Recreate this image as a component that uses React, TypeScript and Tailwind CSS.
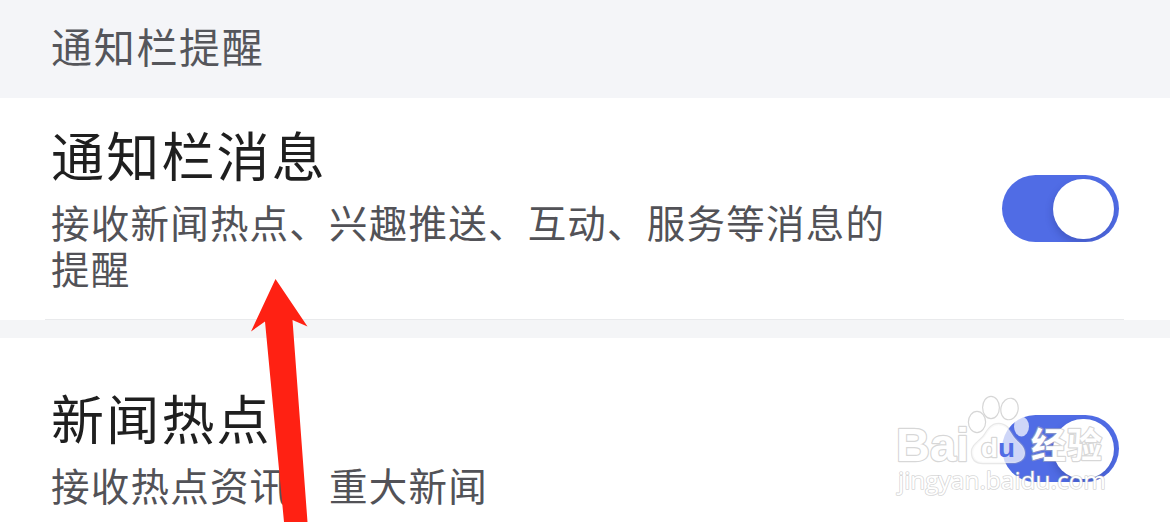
interface SettingRowProps {
  title: string
  lines: string[]
  className: string
  toggleClassName: string
}

const Toggle = ({ className }: { className: string }) => (
  <button
    role="switch"
    aria-checked="true"
    className={`flex h-[67px] w-[117px] shrink-0 items-center justify-end overflow-hidden rounded-full bg-[#506ce5] pr-[5px] ${className}`}
  >
    <span className="h-[60px] w-[61px] rounded-full bg-white shadow-[-1px_4px_7px_rgba(30,40,110,0.25)]" />
  </button>
)

const SettingRow = ({ title, lines, className, toggleClassName }: SettingRowProps) => (
  <section className={`flex items-start justify-between bg-white pr-[51px] pl-[51px] ${className}`}>
    <div className="whitespace-nowrap">
      <h2 className="text-[53px] leading-[60px] tracking-[2.2px] text-[#1f1f1f]">{title}</h2>
      <div className="mt-[14px] text-[38.5px] leading-[46px] tracking-[1.22px] text-[#525257]">
        {lines.map(line => (
          <p key={line}>{line}</p>
        ))}
      </div>
    </div>
    <Toggle className={toggleClassName} />
  </section>
)

const Arrow = () => (
  <svg className="pointer-events-none absolute inset-0" width="1170" height="522" viewBox="0 0 1170 522">
    <path d="M275.5 279 L307.5 326.5 L292.5 320 L307.5 522 L284 522 L265 321.5 L251 331.5 Z" fill="#ff2113" />
  </svg>
)

const Watermark = () => (
  <svg className="pointer-events-none absolute top-[380px] left-[880px]" width="260" height="142" viewBox="0 0 260 142">
    <g
      fill="#ffffff"
      stroke="#b4b4b4"
      strokeOpacity="0.55"
      strokeWidth="2.4"
      strokeLinejoin="round"
      fontFamily="'Liberation Sans', 'Noto Sans CJK SC', sans-serif"
      style={{ paintOrder: 'stroke' }}
    >
      <text x="16" y="81" fontSize="47" fontWeight="700" textLength="73" lengthAdjust="spacingAndGlyphs">
        Bai
      </text>
      <ellipse cx="97" cy="42" rx="8" ry="10" />
      <ellipse cx="111" cy="27.5" rx="7.8" ry="10.5" />
      <ellipse cx="129.5" cy="29" rx="8" ry="10.2" transform="rotate(12 129.5 29)" />
      <g fillOpacity="0.72" strokeOpacity="0.3">
        <ellipse cx="141.5" cy="46.5" rx="7.5" ry="10" stroke="none" />
        <path d="M118.500 44 C127 44 130 51 134 57 C139 63 145 66 145 73 C145 80 139 83 132 83 H103 C96 83 92 79 92 72 C92 65 99 62 104 56 C108 50 111 44 118.500 44 Z" />
      </g>
      <text x="101" y="77" fontSize="26" fontWeight="700" textLength="34" lengthAdjust="spacingAndGlyphs">
        d
        <tspan fill="#506ce5" stroke="none">
          u
        </tspan>
      </text>
      <text x="151" y="78" fontSize="35" fontWeight="700" fontFamily="'Noto Sans CJK SC', sans-serif" textLength="71">
        经验
      </text>
      <text
        x="18"
        y="109"
        fontSize="24"
        strokeWidth="1.6"
        fontFamily="'Open Sans', sans-serif"
        textLength="208"
        lengthAdjust="spacingAndGlyphs"
      >
        jingyan.baidu.com
      </text>
    </g>
  </svg>
)

const App = () => (
  <main className="relative h-[522px] w-[1170px] overflow-hidden bg-white font-['Noto_Sans_CJK_SC',sans-serif]">
    <header className="h-[98px] bg-[#f4f5f8] pt-[15px] pl-[51px]">
      <h1 className="text-[41px] leading-[60px] tracking-[1.7px] text-[#55565b]">通知栏提醒</h1>
    </header>

    <SettingRow
      title="通知栏消息"
      lines={['接收新闻热点、兴趣推送、互动、服务等消息的', '提醒']}
      className="h-[221px] pt-[26px]"
      toggleClassName="mt-[51px]"
    />
    <div className="mr-[46px] ml-[45px] h-px bg-[#e9eaec]" />
    <div className="h-[18px] bg-[#f4f5f7]" />
    <SettingRow
      title="新闻热点"
      lines={['接收热点资讯、重大新闻']}
      className="h-[184px] pt-[49px]"
      toggleClassName="mt-[28px]"
    />

    <Arrow />
    <Watermark />
  </main>
)

export default App
